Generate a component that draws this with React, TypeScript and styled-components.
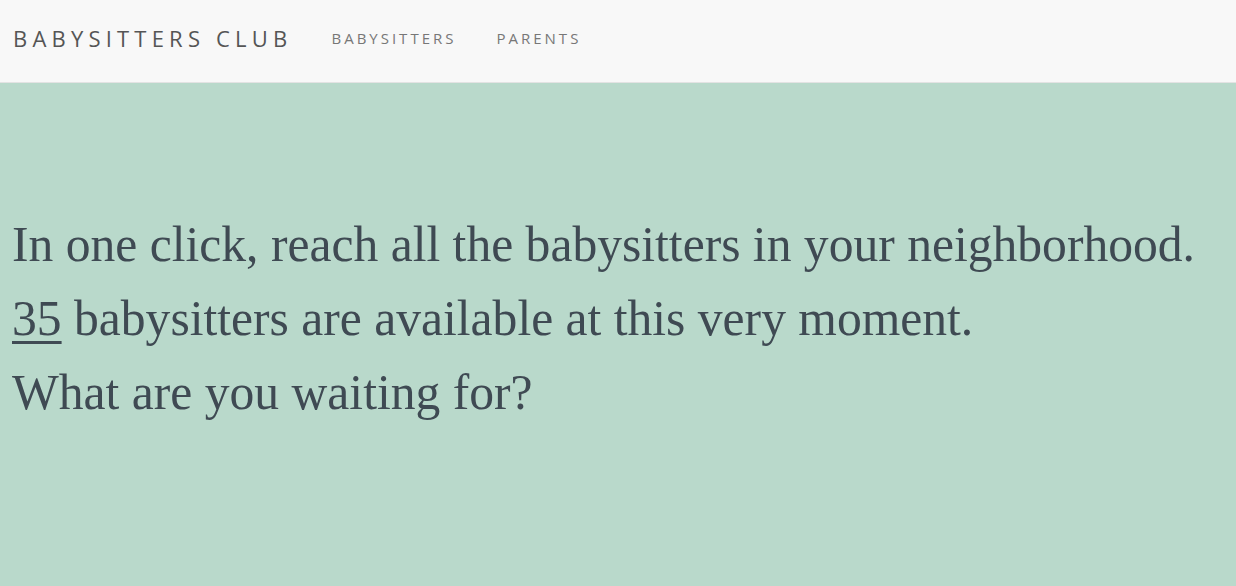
import React from "react";
import styled, { createGlobalStyle } from "styled-components";

const Global = createGlobalStyle`
  html, body { margin: 0; padding: 0; }
  body { background: #b9d9cb; }
`;

const Page = styled.div`
  min-height: 586px;
  background: #b9d9cb;
`;

const NavBar = styled.nav`
  height: 83px;
  box-sizing: border-box;
  background: #f8f8f8;
  border-bottom: 1px solid #e3e3e3;
  display: flex;
  align-items: center;
  padding: 0 0 6px 13px;
`;

const Brand = styled.a`
  font-family: "Open Sans", sans-serif;
  font-size: 22px;
  font-weight: 500;
  letter-spacing: 5.2px;
  color: #555;
  text-decoration: none;
  margin-right: 39px;
`;

const NavLinks = styled.div`
  display: flex;
  gap: 40px;
`;

const NavLink = styled.a`
  font-family: "Open Sans", sans-serif;
  font-size: 15px;
  letter-spacing: 3px;
  color: #777;
  text-decoration: none;
`;

const Hero = styled.section`
  padding: 125px 12px 0;
`;

const Line = styled.p`
  margin: 0;
  font-family: "Liberation Serif", serif;
  font-size: 49.6px;
  line-height: 74px;
  color: #3f4a53;
`;

const Count = styled.span`
  text-decoration: underline;
  text-decoration-thickness: 3px;
  text-underline-offset: 6px;
`;

export default function App() {
  return (
    <Page>
      <Global />
      <NavBar>
        <Brand href="#">BABYSITTERS CLUB</Brand>
        <NavLinks>
          <NavLink href="#">BABYSITTERS</NavLink>
          <NavLink href="#">PARENTS</NavLink>
        </NavLinks>
      </NavBar>
      <Hero>
        <Line>In one click, reach all the babysitters in your neighborhood.</Line>
        <Line>
          <Count>35</Count> babysitters are available at this very moment.
        </Line>
        <Line>What are you waiting for?</Line>
      </Hero>
    </Page>
  );
}
